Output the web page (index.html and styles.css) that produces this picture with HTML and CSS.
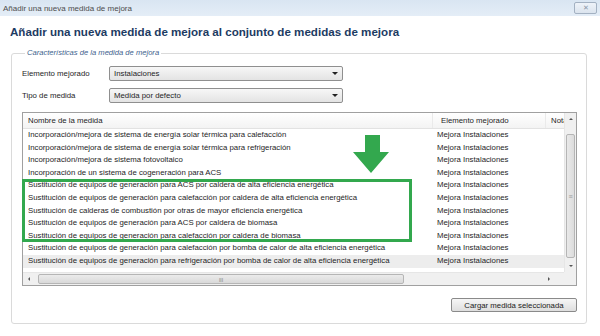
FILE: index.html
```html
<!DOCTYPE html>
<html>
<head>
  <title>Añadir una nueva medida de mejora</title>
  <link rel="stylesheet" href="styles.css">
</head>
<body>
<div class="window">
  <div class="titlebar">
    <span class="title">Añadir una nueva medida de mejora</span>
    <span class="close">&#x2715;</span>
  </div>

  <h1>Añadir una nueva medida de mejora al conjunto de medidas de mejora</h1>

  <fieldset class="group">
    <legend>Características de la medida de mejora</legend>

    <div class="field">
      <label>Elemento mejorado</label>
      <div class="select">Instalaciones<span class="caret"></span></div>
    </div>
    <div class="field">
      <label>Tipo de medida</label>
      <div class="select">Medida por defecto<span class="caret"></span></div>
    </div>

    <div class="grid">
      <div class="viewport">
        <div class="row head">
          <div class="c-name">Nombre de la medida</div>
          <div class="c-elem">Elemento mejorado</div>
          <div class="c-nota">Nota</div>
        </div>
        <div class="row"><div class="c-name">Incorporación/mejora de sistema de energía solar térmica para calefacción</div><div class="c-elem">Mejora Instalaciones</div><div class="c-nota"></div></div>
        <div class="row"><div class="c-name">Incorporación/mejora de sistema de energía solar térmica para refrigeración</div><div class="c-elem">Mejora Instalaciones</div><div class="c-nota"></div></div>
        <div class="row"><div class="c-name">Incorporación/mejora de sistema fotovoltaico</div><div class="c-elem">Mejora Instalaciones</div><div class="c-nota"></div></div>
        <div class="row"><div class="c-name">Incorporación de un sistema de cogeneración para ACS</div><div class="c-elem">Mejora Instalaciones</div><div class="c-nota"></div></div>
        <div class="row"><div class="c-name">Sustitución de equipos de generación para ACS por caldera de alta eficiencia energética</div><div class="c-elem">Mejora Instalaciones</div><div class="c-nota"></div></div>
        <div class="row"><div class="c-name">Sustitución de equipos de generación para calefacción por caldera de alta eficiencia energética</div><div class="c-elem">Mejora Instalaciones</div><div class="c-nota"></div></div>
        <div class="row"><div class="c-name">Sustitución de calderas de combustión por otras de mayor eficiencia energética</div><div class="c-elem">Mejora Instalaciones</div><div class="c-nota"></div></div>
        <div class="row"><div class="c-name">Sustitución de equipos de generación para ACS por caldera de biomasa</div><div class="c-elem">Mejora Instalaciones</div><div class="c-nota"></div></div>
        <div class="row"><div class="c-name">Sustitución de equipos de generación para calefacción por caldera de biomasa</div><div class="c-elem">Mejora Instalaciones</div><div class="c-nota"></div></div>
        <div class="row"><div class="c-name">Sustitución de equipos de generación para calefacción por bomba de calor de alta eficiencia energética</div><div class="c-elem">Mejora Instalaciones</div><div class="c-nota"></div></div>
        <div class="row selected"><div class="c-name">Sustitución de equipos de generación para refrigeración por bomba de calor de alta eficiencia energética</div><div class="c-elem">Mejora Instalaciones</div><div class="c-nota"></div></div>
      </div>

      <div class="vscroll">
        <span class="arrow up"></span>
        <div class="vtrack"><div class="vthumb"><span class="grip-v">&#8801;</span></div></div>
        <span class="arrow down"></span>
      </div>

      <div class="hscroll">
        <span class="arrow left"></span>
        <div class="htrack"><div class="hthumb">III</div></div>
        <span class="arrow right"></span>
      </div>
      <div class="corner"></div>

      <div class="mark-box"></div>
      <svg class="mark-arrow" width="36" height="38" viewBox="0 0 36 38">
        <path d="M12 0 H27 V17 H36 L18 38 L0 17 H12 Z" fill="#33a84e"/>
      </svg>
    </div>

    <div class="actions">
      <button class="btn">Cargar medida seleccionada</button>
    </div>
  </fieldset>
</div>
</body>
</html>
```

FILE: styles.css
```css
body {
  margin: 0;
  background: #fff;
  font-family: "Liberation Sans", Arial, sans-serif;
  color: #1e1e1e;
}
.window {
  width: 600px;
  height: 336px;
  overflow: hidden;
}
.titlebar {
  height: 16px;
  display: flex;
  align-items: center;
  justify-content: space-between;
  padding: 0 3px;
  background: linear-gradient(#d9e5f2, #e4edf7);
}
.title {
  font-size: 8px;
  color: #4d4d4d;
}
.close {
  width: 21px;
  height: 10px;
  border: 1px solid #a3b1c2;
  border-radius: 2px;
  background: linear-gradient(#eef3f9, #dbe4ee);
  color: #8a96a6;
  font-size: 7px;
  line-height: 10px;
  text-align: center;
}
h1 {
  margin: 9px 0 0 10px;
  font-size: 11.6px;
  line-height: 14px;
  color: #1d3b63;
  font-weight: bold;
}
.group {
  margin: 9px 13px 0 11px;
  padding: 0 9px 11px 10px;
  border: 1px solid #dadada;
  border-radius: 3px;
  min-inline-size: 0;
}
.group legend {
  margin-left: 3px;
  padding: 0 2px;
  font-size: 7.6px;
  line-height: 10px;
  font-style: italic;
  color: #3e5f8e;
}
.field {
  display: flex;
  align-items: center;
  height: 15px;
  margin-top: 7px;
  font-size: 7.8px;
}
.field:first-of-type {
  margin-top: 8px;
}
.field label {
  width: 87px;
}
.select {
  position: relative;
  width: 228px;
  height: 13px;
  line-height: 13px;
  padding-left: 4px;
  border: 1px solid #8f8f8f;
  border-radius: 2px;
  background: linear-gradient(#f7f7f7, #e3e3e3);
}
.caret {
  position: absolute;
  right: 4px;
  top: 5px;
  border-left: 3px solid transparent;
  border-right: 3px solid transparent;
  border-top: 3px solid #222;
}
.grid {
  position: relative;
  margin-top: 9px;
  height: 172px;
  border: 1px solid #a0a0a0;
  display: grid;
  grid-template-columns: 1fr 12px;
  grid-template-rows: 1fr 13px;
  font-size: 7.8px;
}
.viewport {
  overflow: hidden;
}
.row {
  display: flex;
  height: 12.6px;
  line-height: 12.6px;
  white-space: nowrap;
}
.row.head {
  height: 15px;
  line-height: 15px;
  background: linear-gradient(#fff, #f3f3f3);
  border-bottom: 1px solid #e2e2e2;
}
.row.selected {
  background: #ededed;
}
.c-name {
  width: 404px;
  padding-left: 5px;
  overflow: hidden;
  flex: none;
}
.c-elem {
  width: 108px;
  padding-left: 5px;
  flex: none;
}
.c-nota {
  padding-left: 5px;
  flex: none;
  width: 30px;
}
.head .c-elem {
  padding-left: 8px;
  width: 104px;
  border-left: 1px solid #eaeaea;
}
.head .c-nota {
  border-left: 1px solid #eaeaea;
}
.vscroll {
  display: flex;
  flex-direction: column;
  background: #f0f0f0;
  border-left: 1px solid #e6e6e6;
}
.vtrack {
  flex: 1;
  padding: 9px 1px 4px;
}
.vthumb {
  height: 100%;
  border: 1px solid #b5b5b5;
  border-radius: 2px;
  background: linear-gradient(90deg, #e9e9e9, #dcdcdc);
  display: flex;
  align-items: center;
  justify-content: center;
}
.grip-v {
  font-size: 7px;
  color: #999;
}
.hscroll {
  display: flex;
  align-items: center;
  background: #f0f0f0;
  border-top: 1px solid #e6e6e6;
}
.htrack {
  flex: 1;
  height: 100%;
  padding: 1px 0;
  box-sizing: border-box;
}
.hthumb {
  width: 366px;
  height: 100%;
  box-sizing: border-box;
  margin-left: 3px;
  border: 1px solid #b5b5b5;
  border-radius: 2px;
  background: linear-gradient(#ebebeb, #d9d9d9);
  font-size: 5px;
  line-height: 10px;
  text-align: center;
  color: #777;
}
.corner {
  background: #f0f0f0;
}
.arrow {
  display: block;
  flex: none;
  width: 0;
  height: 0;
  margin: 5px auto;
  border: 2px solid transparent;
}
.arrow.up {
  border-bottom: 2px solid #555;
  border-top-width: 0;
}
.arrow.down {
  border-top: 2px solid #555;
  border-bottom-width: 0;
}
.arrow.left {
  margin: 0 5px;
  border-right: 2px solid #555;
  border-left-width: 0;
}
.arrow.right {
  margin: 0 14px 0 20px;
  border-left: 2px solid #555;
  border-right-width: 0;
}
.mark-box {
  position: absolute;
  left: -1px;
  top: 66px;
  width: 384px;
  height: 57px;
  border: 3px solid #33a84e;
}
.mark-arrow {
  position: absolute;
  left: 330px;
  top: 22px;
}
.actions {
  display: flex;
  justify-content: flex-end;
  margin-top: 12px;
}
.btn {
  width: 126px;
  height: 14px;
  padding: 0;
  font-family: "Liberation Sans", Arial, sans-serif;
  font-size: 7.8px;
  color: #222;
  border: 1px solid #8a8a8a;
  border-radius: 2px;
  background: linear-gradient(#f6f6f6, #dedede);
}
```
